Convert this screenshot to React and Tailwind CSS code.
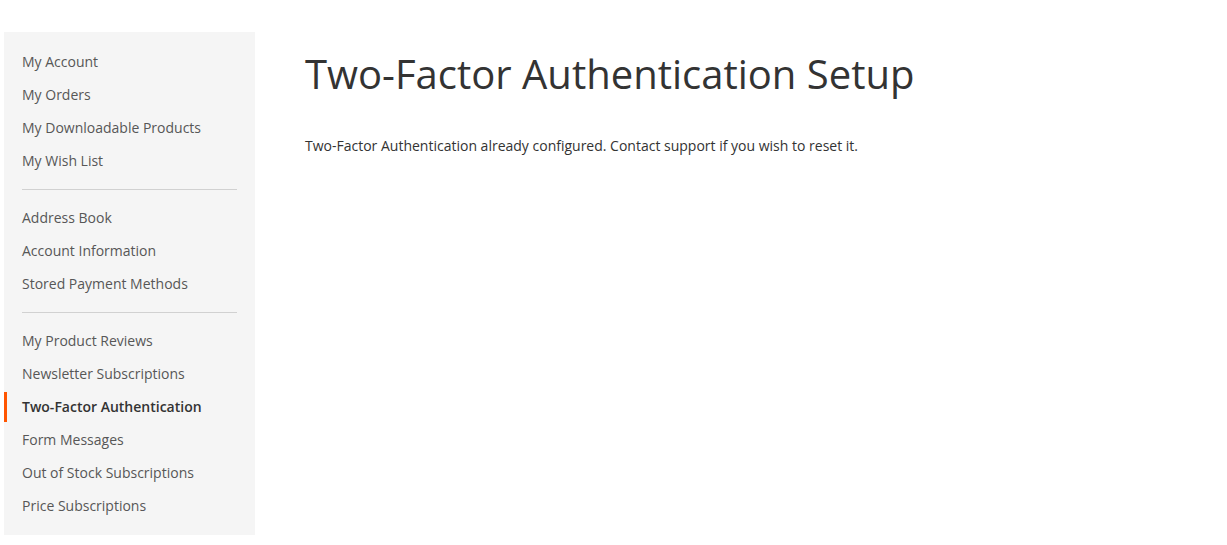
import React from "react";

const groups = [
  ["My Account", "My Orders", "My Downloadable Products", "My Wish List"],
  ["Address Book", "Account Information", "Stored Payment Methods"],
  [
    "My Product Reviews",
    "Newsletter Subscriptions",
    "Two-Factor Authentication",
    "Form Messages",
    "Out of Stock Subscriptions",
    "Price Subscriptions",
  ],
];

const ACTIVE = "Two-Factor Authentication";

export default function App() {
  return (
    <div
      className="flex min-h-[545px] bg-white pl-[4px] pt-[32px] pb-[10px] text-[#333333]"
      style={{ fontFamily: '"Open Sans", "Liberation Sans", sans-serif' }}
    >
      <aside className="w-[251px] shrink-0 bg-[#f5f5f5] pt-[15px] pb-[6px]">
        {groups.map((g, gi) => (
          <div key={gi}>
            {gi > 0 && (
              <div className="mx-[18px] mt-[13px] mb-[13px] h-px bg-[#d1d1d1]" />
            )}
            <ul>
              {g.map((item) => {
                const active = item === ACTIVE;
                return (
                  <li key={item} className="mb-[3px]">
                    <span
                      className={
                        "block border-l-[3px] py-[5px] pr-[18px] pl-[15px] text-[14px] leading-[20px] " +
                        (active
                          ? "border-[#ff5501] font-semibold text-[#333333]"
                          : "border-transparent text-[#575757]")
                      }
                    >
                      {item}
                    </span>
                  </li>
                );
              })}
            </ul>
          </div>
        ))}
      </aside>
      <main className="flex-1 pl-[50px] pt-[20px]">
        <h1 className="mb-[40px] text-[40px] font-normal leading-[44px] text-[#333333]">
          Two-Factor Authentication Setup
        </h1>
        <p className="text-[14px] leading-[20px] text-[#333333]">
          Two-Factor Authentication already configured. Contact support if you wish to reset it.
        </p>
      </main>
    </div>
  );
}
